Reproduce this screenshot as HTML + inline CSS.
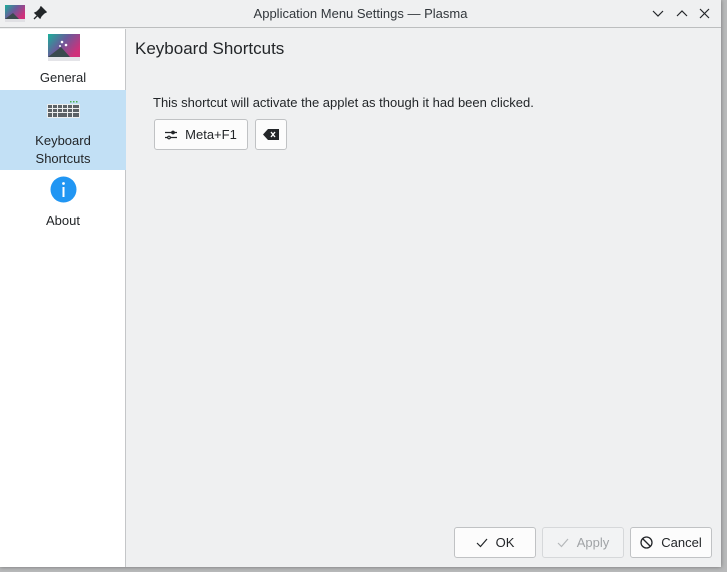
<!DOCTYPE html>
<html><head><style>
*{margin:0;padding:0;box-sizing:border-box}
body{width:727px;height:572px;background:#b8b9ba;font-family:"Liberation Sans","DejaVu Sans",sans-serif;font-size:13px;color:#232629;position:relative;overflow:hidden}
.win{position:absolute;left:0;top:0;width:721px;height:567px;background:#eff0f1;box-shadow:0 0 4px rgba(0,0,0,.4)}
.title{position:absolute;left:0;top:0;width:721px;height:28px;border-bottom:1px solid #bcbebf;background:#eff0f1}
.title .t{position:absolute;left:0;width:721px;top:6px;text-align:center;font-size:13px;color:#31363b}
.side{position:absolute;left:0;top:29px;width:126px;height:538px;background:#fff;border-right:1px solid #c4c6c8}
.item{position:absolute;left:0;width:126px;text-align:center;font-size:13px;color:#232629}
.sel{background:#c2e0f5}
.btn{position:absolute;height:31px;background:#fcfcfc;border:1px solid #c0c2c4;border-radius:3px;font-size:13px;display:flex;align-items:center;justify-content:center;gap:8px;color:#232629}
</style></head><body>
<div class="win">
<div class="title">
<svg style="position:absolute;left:5px;top:5px" width="20" height="18"><defs><linearGradient id="g" x1="0" y1="0" x2="1" y2="0.6"><stop offset="0" stop-color="#1ab09a"/><stop offset="0.5" stop-color="#6a5a9a"/><stop offset="1" stop-color="#d0307a"/></linearGradient></defs><rect width="20" height="14" fill="url(#g)"/><polygon points="0,14 8,8 14,14" fill="#3a4a4e"/><rect y="14" width="20" height="3" fill="#e0e0e4"/></svg>
<svg style="position:absolute;left:33px;top:6px" width="14" height="14"><path d="M8 1 L13 6 L11 7 L8 10 L7 12 L2 7 L4 6 L7 3Z M4 10 L1 13" stroke="#232629" stroke-width="1.4" fill="#232629"/></svg>
<div class="t">Application Menu Settings — Plasma</div>
<svg style="position:absolute;left:652px;top:8px" width="60" height="12" fill="none" stroke="#232629" stroke-width="1.2"><path d="M1 3 L6 8 L11 3"/><path d="M25 8 L30 3 L35 8"/><path d="M48 1 L57 10 M57 1 L48 10"/></svg>
</div>
<div class="side">
<div class="item" style="top:0;height:61px">
<svg style="position:absolute;left:48px;top:5px" width="32" height="28"><rect width="32" height="23" fill="url(#g)"/><polygon points="0,23 13,13 22,23" fill="#3a4a4e"/><rect y="23" width="32" height="4" fill="#e4e4e8"/><circle cx="14" cy="8" r="1.3" fill="#fff"/><circle cx="18" cy="11" r="1.3" fill="#fff"/><circle cx="12" cy="12" r="1" fill="#fff"/></svg>
<div style="position:absolute;top:41px;width:126px">General</div></div>
<div class="item sel" style="top:61px;height:80px">
<svg style="position:absolute;left:47px;top:11px" width="34" height="17"><rect y="3" width="33" height="14" rx="1" fill="#eceeee"/><g fill="#5c6266"><rect x="1" y="4" width="31" height="3"/><rect x="1" y="8" width="31" height="3"/><rect x="1" y="12" width="31" height="4"/></g><g fill="#eceeee"><rect x="5" y="4" width="1" height="12"/><rect x="10" y="4" width="1" height="12"/><rect x="15" y="4" width="1" height="8"/><rect x="20" y="4" width="1" height="12"/><rect x="25" y="4" width="1" height="12"/></g><g fill="#4caf50"><rect x="26" y="0" width="1.5" height="1.5"/><rect x="29" y="0" width="1.5" height="1.5"/><rect x="23" y="0" width="1.5" height="1.5"/></g></svg>
<div style="position:absolute;top:42px;width:126px;line-height:18px">Keyboard<br>Shortcuts</div></div>
<div class="item" style="top:141px;height:60px">
<svg style="position:absolute;left:50px;top:6px" width="27" height="27"><circle cx="13.5" cy="13.5" r="13" fill="#2196f3"/><rect x="12.5" y="11" width="2" height="10" fill="#fff"/><circle cx="13.5" cy="7.5" r="1.4" fill="#fff"/></svg>
<div style="position:absolute;top:43px;width:126px">About</div></div>
</div>
<div style="position:absolute;left:135px;top:39px;font-size:17px;color:#232629">Keyboard Shortcuts</div>
<div style="position:absolute;left:153px;top:95px">This shortcut will activate the applet as though it had been clicked.</div>
<div class="btn" style="left:154px;top:119px;width:94px"><svg width="12" height="12" stroke="#232629" stroke-width="1.2" fill="none"><path d="M0 3.5 H12 M0 8.5 H12"/><circle cx="8" cy="3.5" r="1.3" fill="#232629"/><circle cx="4" cy="8.5" r="1.3" fill="#fcfcfc"/></svg>Meta+F1</div>
<div class="btn" style="left:255px;top:119px;width:32px"><svg width="16" height="11"><path d="M5 0 H16 V11 H5 L0 5.5Z" fill="#232629"/><path d="M8 3 L12 8 M12 3 L8 8" stroke="#fff" stroke-width="1.4"/></svg></div>
<div class="btn" style="left:454px;top:527px;width:82px"><svg width="12" height="10" fill="none" stroke="#232629" stroke-width="1.2"><path d="M1 5 L4.5 8.5 L11 1"/></svg>OK</div>
<div class="btn" style="left:542px;top:527px;width:82px;background:#f2f3f4;border-color:#d6d8da;color:#a0a3a6"><svg width="12" height="10" fill="none" stroke="#b5b8ba" stroke-width="1.2"><path d="M1 5 L4.5 8.5 L11 1"/></svg>Apply</div>
<div class="btn" style="left:630px;top:527px;width:82px"><svg width="13" height="13" fill="none" stroke="#232629" stroke-width="1.3"><circle cx="6.5" cy="6.5" r="5.5"/><path d="M2.5 2.5 L10.5 10.5"/></svg>Cancel</div>
</div>
</body></html>
